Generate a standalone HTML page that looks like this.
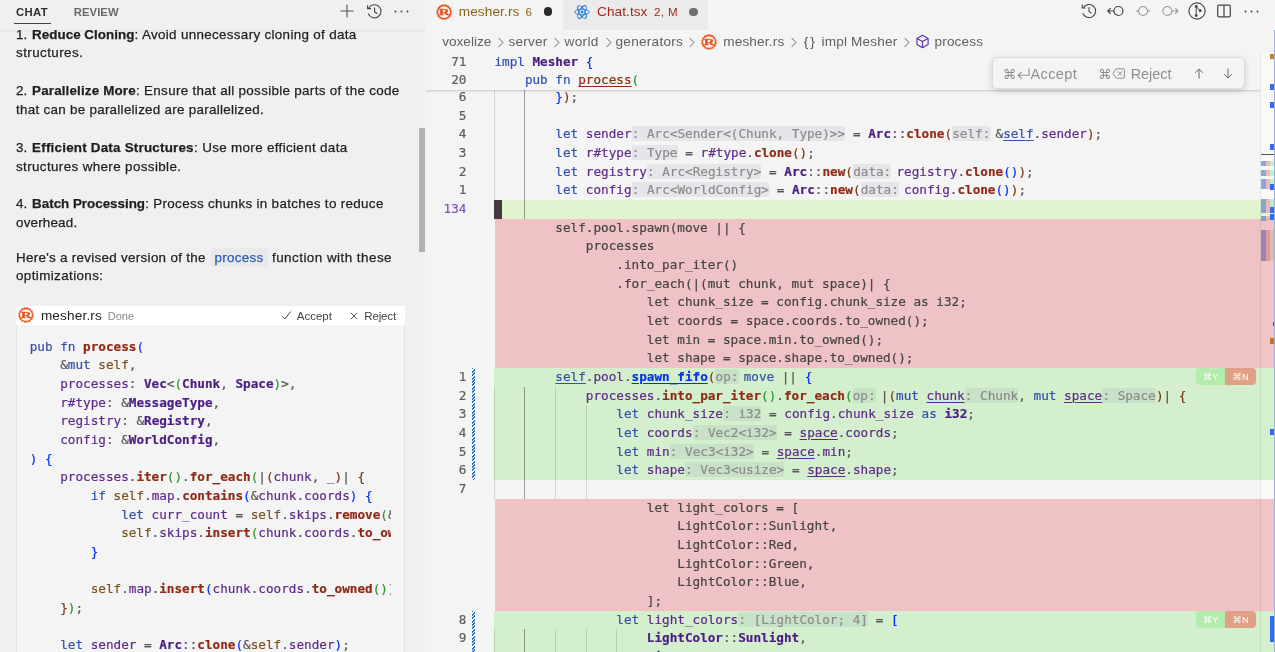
<!DOCTYPE html><html lang="en"><head><meta charset="utf-8"><title>mesher.rs</title><style>
*{box-sizing:border-box}
html,body{margin:0;padding:0}
body{width:1275px;height:652px;overflow:hidden;position:relative;background:#f4f4f4;font-family:"Liberation Sans", "DejaVu Sans", sans-serif;font-size:13px;color:#222}
.abs{position:absolute}
#left{will-change:transform;position:absolute;left:0;top:0;width:425.2px;height:652px;background:#f0f0f0;overflow:hidden}
#right{will-change:transform;position:absolute;left:426px;top:0;width:849px;height:652px;background:#f4f4f4;overflow:hidden}
.mono{-webkit-text-stroke:0.2px;font-family:"DejaVu Sans Mono", "Liberation Mono", monospace;font-size:12.665px;white-space:pre;line-height:18.667px;letter-spacing:0}
.row{position:absolute;left:0;width:849px;height:18.667px}
.ln{position:absolute;left:0;width:40.4px;text-align:right;color:#5c6055;height:18.667px}
.code{position:absolute;left:68.39999999999998px;height:18.667px;color:#444}
.k{color:#3450b0}
.v{color:#5e2b8c}
.t{color:#4b1d82;font-weight:bold}
.f{color:#8e2a16;font-weight:bold}
.fn{color:#8e2a16}
.s{color:#7a5222}
.p{color:#555}
.b1{color:#0431fa}
.b2{color:#319331}
.b3{color:#7b3814}
.h{color:#8c8c8c;background:rgba(40,40,110,0.065);border-radius:2px;padding:0 0.2px}
.hp{margin-right:5px}
.bd{font-weight:bold}
.u{text-decoration:underline;text-underline-offset:2px}
.fit{white-space:pre}
.bc{font-size:13.5px;line-height:18px;color:#616161;white-space:pre}
.cl{position:absolute;left:16px;white-space:pre;font-size:13px;line-height:19px;height:19px;color:#1f1f1f}
.cl b{font-weight:bold}
</style></head><body>
<div id="left">
<div class="abs fit " id="c0" style="left:16.0px;top:24.7px;letter-spacing:0.114px;font-size:13.4px;line-height:19px;color:#1f1f1f;-webkit-text-stroke:0.25px;">1.</div>
<div class="abs fit " id="c1" style="left:32.1px;top:24.7px;letter-spacing:0.027px;font-size:13.4px;line-height:19px;color:#1f1f1f;-webkit-text-stroke:0.25px;"><b>Reduce Cloning</b></div>
<div class="abs fit " id="c2" style="left:134.6px;top:24.7px;letter-spacing:0.330px;font-size:13.4px;line-height:19px;color:#1f1f1f;-webkit-text-stroke:0.25px;">: Avoid unnecessary cloning of data</div>
<div class="abs fit " id="c3" style="left:16.0px;top:43.4px;letter-spacing:0.435px;font-size:13.4px;line-height:19px;color:#1f1f1f;-webkit-text-stroke:0.25px;">structures.</div>
<div class="abs fit " id="c4" style="left:16.0px;top:80.8px;letter-spacing:0.114px;font-size:13.4px;line-height:19px;color:#1f1f1f;-webkit-text-stroke:0.25px;">2.</div>
<div class="abs fit " id="c5" style="left:32.1px;top:80.8px;letter-spacing:0.154px;font-size:13.4px;line-height:19px;color:#1f1f1f;-webkit-text-stroke:0.25px;"><b>Parallelize More</b></div>
<div class="abs fit " id="c6" style="left:136.0px;top:80.8px;letter-spacing:0.323px;font-size:13.4px;line-height:19px;color:#1f1f1f;-webkit-text-stroke:0.25px;">: Ensure that all possible parts of the code</div>
<div class="abs fit " id="c7" style="left:16.0px;top:99.6px;letter-spacing:0.286px;font-size:13.4px;line-height:19px;color:#1f1f1f;-webkit-text-stroke:0.25px;">that can be parallelized are parallelized.</div>
<div class="abs fit " id="c8" style="left:16.0px;top:137.5px;letter-spacing:0.114px;font-size:13.4px;line-height:19px;color:#1f1f1f;-webkit-text-stroke:0.25px;">3.</div>
<div class="abs fit " id="c9" style="left:32.1px;top:137.5px;letter-spacing:0.217px;font-size:13.4px;line-height:19px;color:#1f1f1f;-webkit-text-stroke:0.25px;"><b>Efficient Data Structures</b></div>
<div class="abs fit " id="c10" style="left:194.0px;top:137.5px;letter-spacing:0.344px;font-size:13.4px;line-height:19px;color:#1f1f1f;-webkit-text-stroke:0.25px;">: Use more efficient data</div>
<div class="abs fit " id="c11" style="left:16.0px;top:156.5px;letter-spacing:0.378px;font-size:13.4px;line-height:19px;color:#1f1f1f;-webkit-text-stroke:0.25px;">structures where possible.</div>
<div class="abs fit " id="c12" style="left:16.0px;top:193.8px;letter-spacing:0.114px;font-size:13.4px;line-height:19px;color:#1f1f1f;-webkit-text-stroke:0.25px;">4.</div>
<div class="abs fit " id="c13" style="left:32.1px;top:193.8px;letter-spacing:-0.014px;font-size:13.4px;line-height:19px;color:#1f1f1f;-webkit-text-stroke:0.25px;"><b>Batch Processing</b></div>
<div class="abs fit " id="c14" style="left:145.2px;top:193.8px;letter-spacing:0.330px;font-size:13.4px;line-height:19px;color:#1f1f1f;-webkit-text-stroke:0.25px;">: Process chunks in batches to reduce</div>
<div class="abs fit " id="c15" style="left:16.0px;top:212.6px;letter-spacing:0.193px;font-size:13.4px;line-height:19px;color:#1f1f1f;-webkit-text-stroke:0.25px;">overhead.</div>
<div class="abs fit " id="c16" style="left:16.0px;top:247.8px;letter-spacing:0.298px;font-size:13.4px;line-height:19px;color:#1f1f1f;-webkit-text-stroke:0.25px;">Here's a revised version of the</div>
<div class="abs fit " id="c17" style="left:272.0px;top:247.8px;letter-spacing:0.478px;font-size:13.4px;line-height:19px;color:#1f1f1f;-webkit-text-stroke:0.25px;">function with these</div>
<div class="abs fit " id="c18" style="left:16.0px;top:266.3px;letter-spacing:0.395px;font-size:13.4px;line-height:19px;color:#1f1f1f;-webkit-text-stroke:0.25px;">optimizations:</div>
<div class="abs" style="left:210.8px;top:247.6px;width:57px;height:19px;background:#e9e9e9;border-radius:3px"></div>
<div class="abs fit " id="cproc" style="left:214.6px;top:247.8px;letter-spacing:0.301px;font-size:13.4px;line-height:19px;color:#1f1f1f;-webkit-text-stroke:0.25px;color:#2a5db0">process</div>
<div class="abs" style="left:0;top:0;width:426px;height:30px;background:#f0f0f0;box-shadow:0 1px 2px rgba(0,0,0,0.07)"></div>
<div class="abs fit " id="tabchat" style="left:16.0px;top:4.9px;letter-spacing:0.363px;font-size:11.3px;line-height:14px;font-weight:bold;color:#2f2f2f">CHAT</div>
<div class="abs" style="left:14px;top:22.5px;width:36.5px;height:1px;background:#444"></div>
<div class="abs fit " id="tabrev" style="left:73.7px;top:4.9px;letter-spacing:0.070px;font-size:11.3px;line-height:14px;font-weight:bold;color:#6a6a6a">REVIEW</div>
<svg class="abs" style="left:339px;top:3px" width="16" height="16" viewBox="0 0 16 16"><path d="M8 1.5v13M1.5 8h13" stroke="#555" stroke-width="1.1" fill="none"/></svg>
<svg class="abs" style="left:366px;top:3px" width="17" height="17" viewBox="0 0 17 17" fill="none" stroke="#444" stroke-width="1.1"><path d="M2.6 5.2A6.6 6.6 0 1 1 2.2 10.5"/><path d="M1.6 2.2v3.4h3.4"/><path d="M8.6 4.6v4.2l2.6 2"/></svg>
<svg class="abs" style="left:393px;top:9px" width="17" height="5" viewBox="0 0 17 5"><circle cx="2.5" cy="2.5" r="1" fill="#444"/><circle cx="8.5" cy="2.5" r="1" fill="#444"/><circle cx="14.5" cy="2.5" r="1" fill="#444"/></svg>
<div class="abs" style="left:418.6px;top:128.4px;width:6.6px;height:124px;background:#b3b3b3"></div>
<div class="abs" style="left:16px;top:306px;width:388.7px;height:360px;background:#f4f4f4;border:1px solid #e2e2e2"></div>
<div class="abs" style="left:16px;top:306px;width:388.7px;height:19.1px;background:#fff"></div>
<div class="abs fit " id="cardname" style="left:40.9px;top:306.5px;letter-spacing:0.157px;font-size:13.6px;line-height:18px;color:#222">mesher.rs</div>
<div class="abs fit " id="carddone" style="left:107.8px;top:307.4px;letter-spacing:-0.024px;font-size:11px;line-height:18px;color:#8a8a8a">Done</div>
<div class="abs fit " id="cardacc" style="left:296.7px;top:306.9px;letter-spacing:0.021px;font-size:11.5px;line-height:18px;color:#444">Accept</div>
<div class="abs fit " id="cardrej" style="left:364.3px;top:306.9px;letter-spacing:-0.152px;font-size:11.5px;line-height:18px;color:#444">Reject</div>
<svg class="abs" style="left:281px;top:310px" width="11" height="11" viewBox="0 0 11 11"><path d="M1 6.2l2.8 2.8L9.6 1.6" stroke="#444" stroke-width="1" fill="none"/></svg>
<svg class="abs" style="left:350px;top:311.5px" width="8" height="8" viewBox="0 0 8 8"><path d="M0.8 0.8l6.4 6.4M7.2 0.8L0.8 7.2" stroke="#444" stroke-width="0.9" fill="none"/></svg>
<svg class="abs" style="left:16.9px;top:306.1px" width="18.0" height="18.0" viewBox="-9.0 -9.0 18.0 18.0"><circle r="6.51" fill="none" stroke="#e8561f" stroke-width="1.3"/><path d="M6.63 1.32L7.60 1.51M5.62 3.76L6.44 4.31M3.76 5.62L4.31 6.44M1.32 6.63L1.51 7.60M-1.32 6.63L-1.51 7.60M-3.76 5.62L-4.31 6.44M-5.62 3.76L-6.44 4.31M-6.63 1.32L-7.60 1.51M-6.63 -1.32L-7.60 -1.51M-5.62 -3.76L-6.44 -4.31M-3.76 -5.62L-4.31 -6.44M-1.32 -6.63L-1.51 -7.60M1.32 -6.63L1.51 -7.60M3.76 -5.62L4.31 -6.44M5.62 -3.76L6.44 -4.31M6.63 -1.32L7.60 -1.51" stroke="#e8561f" stroke-width="1.7" fill="none"/><text x="0" y="2.88" text-anchor="middle" transform="scale(1.85 1)" font-family='"Liberation Serif","DejaVu Serif",serif' font-weight="bold" font-size="8.0" fill="#e8561f" stroke="#e8561f" stroke-width="0.3">R</text></svg>
<div class="abs mono" style="left:29.7px;top:337.7px;width:361px;height:320px;overflow:hidden;color:#444">
<div class="abs" style="left:0;top:0.00px;height:18.667px"><span class="k">pub</span> <span class="k">fn</span> <span class="f">process</span><span class="b1">(</span></div>
<div class="abs" style="left:0;top:18.67px;height:18.667px">    <span class="p">&amp;</span><span class="k">mut</span> <span class="s">self</span><span class="p">,</span></div>
<div class="abs" style="left:0;top:37.33px;height:18.667px">    <span class="v">processes</span><span class="p">:</span> <span class="t">Vec</span><span class="p">&lt;</span><span class="b2">(</span><span class="t">Chunk</span><span class="p">,</span> <span class="t">Space</span><span class="b2">)</span><span class="p">&gt;,</span></div>
<div class="abs" style="left:0;top:56.00px;height:18.667px">    <span class="v">r#type</span><span class="p">:</span> <span class="p">&amp;</span><span class="t">MessageType</span><span class="p">,</span></div>
<div class="abs" style="left:0;top:74.67px;height:18.667px">    <span class="v">registry</span><span class="p">:</span> <span class="p">&amp;</span><span class="t">Registry</span><span class="p">,</span></div>
<div class="abs" style="left:0;top:93.34px;height:18.667px">    <span class="v">config</span><span class="p">:</span> <span class="p">&amp;</span><span class="t">WorldConfig</span><span class="p">,</span></div>
<div class="abs" style="left:0;top:112.00px;height:18.667px"><span class="b1">)</span> <span class="b1">{</span></div>
<div class="abs" style="left:0;top:130.67px;height:18.667px">    <span class="v">processes</span><span class="p">.</span><span class="f">iter</span><span class="b2">()</span><span class="p">.</span><span class="f">for_each</span><span class="b2">(</span><span class="p">|</span><span class="b3">(</span><span class="v">chunk</span><span class="p">,</span> <span class="v">_</span><span class="b3">)</span><span class="p">|</span> <span class="b3">{</span></div>
<div class="abs" style="left:0;top:149.34px;height:18.667px">        <span class="k">if</span> <span class="s">self</span><span class="p">.</span><span class="v">map</span><span class="p">.</span><span class="f">contains</span><span class="b1">(</span><span class="p">&amp;</span><span class="v">chunk</span><span class="p">.</span><span class="v">coords</span><span class="b1">)</span> <span class="b1">{</span></div>
<div class="abs" style="left:0;top:168.00px;height:18.667px">            <span class="k">let</span> <span class="v">curr_count</span> <span class="p">=</span> <span class="s">self</span><span class="p">.</span><span class="v">skips</span><span class="p">.</span><span class="f">remove</span><span class="b2">(</span><span class="p">&amp;</span><span class="v">chunk.coords).unwrap_or(0);</span></div>
<div class="abs" style="left:0;top:186.67px;height:18.667px">            <span class="s">self</span><span class="p">.</span><span class="v">skips</span><span class="p">.</span><span class="f">insert</span><span class="b2">(</span><span class="v">chunk</span><span class="p">.</span><span class="v">coords</span><span class="p">.</span><span class="f">to_owned</span><span class="b3">()</span><span class="p">, curr_count + 1);</span></div>
<div class="abs" style="left:0;top:205.34px;height:18.667px">        <span class="b1">}</span></div>
<div class="abs" style="left:0;top:224.00px;height:18.667px"></div>
<div class="abs" style="left:0;top:242.67px;height:18.667px">        <span class="s">self</span><span class="p">.</span><span class="v">map</span><span class="p">.</span><span class="f">insert</span><span class="b1">(</span><span class="v">chunk</span><span class="p">.</span><span class="v">coords</span><span class="p">.</span><span class="f">to_owned</span><span class="b2">()</span><span class="p">));</span></div>
<div class="abs" style="left:0;top:261.34px;height:18.667px">    <span class="b3">}</span><span class="b2">)</span><span class="p">;</span></div>
<div class="abs" style="left:0;top:280.00px;height:18.667px"></div>
<div class="abs" style="left:0;top:298.67px;height:18.667px">    <span class="k">let</span> <span class="v">sender</span> <span class="p">=</span> <span class="t">Arc</span><span class="p">::</span><span class="f">clone</span><span class="b1">(</span><span class="p">&amp;</span><span class="s">self</span><span class="p">.</span><span class="v">sender</span><span class="b1">)</span><span class="p">;</span></div>
</div>
</div>
<div id="right">
<div class="abs" style="left:834px;top:52.5px;width:15px;height:600px;background:#f9f9f9"></div>
<div class="mono">
<div class="abs" style="left:67.7px;top:200.10px;width:781.3px;height:18.72px;background:#e1f3d0"></div>
<div class="abs" style="left:68.8px;top:218.77px;width:780.2px;height:18.72px;background:#efc2c5"></div>
<div class="abs" style="left:68.8px;top:237.43px;width:780.2px;height:18.72px;background:#efc2c5"></div>
<div class="abs" style="left:68.8px;top:256.10px;width:780.2px;height:18.72px;background:#efc2c5"></div>
<div class="abs" style="left:68.8px;top:274.77px;width:780.2px;height:18.72px;background:#efc2c5"></div>
<div class="abs" style="left:68.8px;top:293.44px;width:780.2px;height:18.72px;background:#efc2c5"></div>
<div class="abs" style="left:68.8px;top:312.10px;width:780.2px;height:18.72px;background:#efc2c5"></div>
<div class="abs" style="left:68.8px;top:330.77px;width:780.2px;height:18.72px;background:#efc2c5"></div>
<div class="abs" style="left:68.8px;top:349.44px;width:780.2px;height:18.72px;background:#efc2c5"></div>
<div class="abs" style="left:67.7px;top:368.10px;width:781.3px;height:18.72px;background:#d3efcd"></div>
<div class="abs" style="left:67.7px;top:386.77px;width:781.3px;height:18.72px;background:#d3efcd"></div>
<div class="abs" style="left:67.7px;top:405.44px;width:781.3px;height:18.72px;background:#d3efcd"></div>
<div class="abs" style="left:67.7px;top:424.10px;width:781.3px;height:18.72px;background:#d3efcd"></div>
<div class="abs" style="left:67.7px;top:442.77px;width:781.3px;height:18.72px;background:#d3efcd"></div>
<div class="abs" style="left:67.7px;top:461.44px;width:781.3px;height:18.72px;background:#d3efcd"></div>
<div class="abs" style="left:68.8px;top:498.77px;width:780.2px;height:18.72px;background:#efc2c5"></div>
<div class="abs" style="left:68.8px;top:517.44px;width:780.2px;height:18.72px;background:#efc2c5"></div>
<div class="abs" style="left:68.8px;top:536.11px;width:780.2px;height:18.72px;background:#efc2c5"></div>
<div class="abs" style="left:68.8px;top:554.77px;width:780.2px;height:18.72px;background:#efc2c5"></div>
<div class="abs" style="left:68.8px;top:573.44px;width:780.2px;height:18.72px;background:#efc2c5"></div>
<div class="abs" style="left:68.8px;top:592.11px;width:780.2px;height:18.72px;background:#efc2c5"></div>
<div class="abs" style="left:67.7px;top:610.77px;width:781.3px;height:18.72px;background:#d3efcd"></div>
<div class="abs" style="left:67.7px;top:629.44px;width:781.3px;height:18.72px;background:#d3efcd"></div>
<div class="abs" style="left:67.7px;top:648.11px;width:781.3px;height:18.72px;background:#d3efcd"></div>
<div class="abs" style="left:68.0px;top:88.00px;width:1px;height:112.10px;background:rgba(0,0,0,0.13)"></div>
<div class="abs" style="left:98.3px;top:88.00px;width:1px;height:130.77px;background:rgba(0,0,0,0.36)"></div>
<div class="abs" style="left:68.0px;top:386.77px;width:1px;height:112.00px;background:rgba(0,0,0,0.13)"></div>
<div class="abs" style="left:98.3px;top:386.77px;width:1px;height:112.00px;background:rgba(0,0,0,0.36)"></div>
<div class="abs" style="left:129.0px;top:386.77px;width:1px;height:112.00px;background:rgba(0,0,0,0.13)"></div>
<div class="abs" style="left:159.6px;top:405.44px;width:1px;height:93.34px;background:rgba(0,0,0,0.13)"></div>
<div class="abs" style="left:68.0px;top:629.44px;width:1px;height:22.56px;background:rgba(0,0,0,0.13)"></div>
<div class="abs" style="left:98.3px;top:629.44px;width:1px;height:22.56px;background:rgba(0,0,0,0.36)"></div>
<div class="abs" style="left:129.0px;top:629.44px;width:1px;height:22.56px;background:rgba(0,0,0,0.13)"></div>
<div class="abs" style="left:159.6px;top:629.44px;width:1px;height:22.56px;background:rgba(0,0,0,0.13)"></div>
<div class="abs" style="left:190.0px;top:629.44px;width:1px;height:22.56px;background:rgba(0,0,0,0.13)"></div>
<div class="row" style="top:88.10px"><div class="ln" style="">6</div><div class="code">        <span class="b1">}</span><span class="b3">)</span><span class="p">;</span></div></div>
<div class="row" style="top:106.76px"><div class="ln" style="">5</div><div class="code"></div></div>
<div class="row" style="top:125.43px"><div class="ln" style="">4</div><div class="code">        <span class="k">let</span> <span class="v">sender</span><span class="h">: Arc&lt;Sender&lt;(Chunk, Type)&gt;&gt;</span> <span class="p">=</span> <span class="t">Arc</span><span class="p">::</span><span class="f">clone</span><span class="b3">(</span><span class="h hp">self:</span><span class="p">&amp;</span><span class="k u">self</span><span class="p">.</span><span class="v">sender</span><span class="b3">)</span><span class="p">;</span></div></div>
<div class="row" style="top:144.10px"><div class="ln" style="">3</div><div class="code">        <span class="k">let</span> <span class="v">r#type</span><span class="h">: Type</span> <span class="p">=</span> <span class="v">r#type</span><span class="p">.</span><span class="f">clone</span><span class="b3">()</span><span class="p">;</span></div></div>
<div class="row" style="top:162.77px"><div class="ln" style="">2</div><div class="code">        <span class="k">let</span> <span class="v">registry</span><span class="h">: Arc&lt;Registry&gt;</span> <span class="p">=</span> <span class="t">Arc</span><span class="p">::</span><span class="f">new</span><span class="b3">(</span><span class="h hp">data:</span><span class="v">registry</span><span class="p">.</span><span class="f">clone</span><span class="b1">()</span><span class="b3">)</span><span class="p">;</span></div></div>
<div class="row" style="top:181.43px"><div class="ln" style="">1</div><div class="code">        <span class="k">let</span> <span class="v">config</span><span class="h">: Arc&lt;WorldConfig&gt;</span> <span class="p">=</span> <span class="t">Arc</span><span class="p">::</span><span class="f">new</span><span class="b3">(</span><span class="h hp">data:</span><span class="v">config</span><span class="p">.</span><span class="f">clone</span><span class="b1">()</span><span class="b3">)</span><span class="p">;</span></div></div>
<div class="row" style="top:200.10px"><div class="ln" style=";color:#7b52c4">134</div><div class="code"></div></div>
<div class="row" style="top:218.77px"><div class="ln" style=""></div><div class="code"><span class="r">        self.pool.spawn(move || {</span></div></div>
<div class="row" style="top:237.43px"><div class="ln" style=""></div><div class="code"><span class="r">            processes</span></div></div>
<div class="row" style="top:256.10px"><div class="ln" style=""></div><div class="code"><span class="r">                .into_par_iter()</span></div></div>
<div class="row" style="top:274.77px"><div class="ln" style=""></div><div class="code"><span class="r">                .for_each(|(mut chunk, mut space)| {</span></div></div>
<div class="row" style="top:293.44px"><div class="ln" style=""></div><div class="code"><span class="r">                    let chunk_size = config.chunk_size as i32;</span></div></div>
<div class="row" style="top:312.10px"><div class="ln" style=""></div><div class="code"><span class="r">                    let coords = space.coords.to_owned();</span></div></div>
<div class="row" style="top:330.77px"><div class="ln" style=""></div><div class="code"><span class="r">                    let min = space.min.to_owned();</span></div></div>
<div class="row" style="top:349.44px"><div class="ln" style=""></div><div class="code"><span class="r">                    let shape = space.shape.to_owned();</span></div></div>
<div class="row" style="top:368.10px"><div class="ln" style="">1</div><div class="code">        <span class="k u">self</span><span class="p">.</span><span class="v">pool</span><span class="p">.</span><span class="b1 u bd">spawn_fifo</span><span class="b3">(</span><span class="h hp">op:</span><span class="k">move</span> <span class="p">||</span> <span class="b1">{</span></div></div>
<div class="row" style="top:386.77px"><div class="ln" style="">2</div><div class="code">            <span class="v">processes</span><span class="p">.</span><span class="f">into_par_iter</span><span class="b2">()</span><span class="p">.</span><span class="f">for_each</span><span class="b2">(</span><span class="h hp">op:</span><span class="p">|</span><span class="b3">(</span><span class="k">mut</span> <span class="v u">chunk</span><span class="h">: Chunk</span><span class="p">,</span> <span class="k">mut</span> <span class="v u">space</span><span class="h">: Space</span><span class="b3">)</span><span class="p">|</span> <span class="b3">{</span></div></div>
<div class="row" style="top:405.44px"><div class="ln" style="">3</div><div class="code">                <span class="k">let</span> <span class="v">chunk_size</span><span class="h">: i32</span> <span class="p">=</span> <span class="v">config</span><span class="p">.</span><span class="v">chunk_size</span> <span class="k">as</span> <span class="t">i32</span><span class="p">;</span></div></div>
<div class="row" style="top:424.10px"><div class="ln" style="">4</div><div class="code">                <span class="k">let</span> <span class="v">coords</span><span class="h">: Vec2&lt;i32&gt;</span> <span class="p">=</span> <span class="v u">space</span><span class="p">.</span><span class="v">coords</span><span class="p">;</span></div></div>
<div class="row" style="top:442.77px"><div class="ln" style="">5</div><div class="code">                <span class="k">let</span> <span class="v">min</span><span class="h">: Vec3&lt;i32&gt;</span> <span class="p">=</span> <span class="v u">space</span><span class="p">.</span><span class="v">min</span><span class="p">;</span></div></div>
<div class="row" style="top:461.44px"><div class="ln" style="">6</div><div class="code">                <span class="k">let</span> <span class="v">shape</span><span class="h">: Vec3&lt;usize&gt;</span> <span class="p">=</span> <span class="v u">space</span><span class="p">.</span><span class="v">shape</span><span class="p">;</span></div></div>
<div class="row" style="top:480.11px"><div class="ln" style="">7</div><div class="code"></div></div>
<div class="row" style="top:498.77px"><div class="ln" style=""></div><div class="code"><span class="r">                    let light_colors = [</span></div></div>
<div class="row" style="top:517.44px"><div class="ln" style=""></div><div class="code"><span class="r">                        LightColor::Sunlight,</span></div></div>
<div class="row" style="top:536.11px"><div class="ln" style=""></div><div class="code"><span class="r">                        LightColor::Red,</span></div></div>
<div class="row" style="top:554.77px"><div class="ln" style=""></div><div class="code"><span class="r">                        LightColor::Green,</span></div></div>
<div class="row" style="top:573.44px"><div class="ln" style=""></div><div class="code"><span class="r">                        LightColor::Blue,</span></div></div>
<div class="row" style="top:592.11px"><div class="ln" style=""></div><div class="code"><span class="r">                    ];</span></div></div>
<div class="row" style="top:610.77px"><div class="ln" style="">8</div><div class="code">                <span class="k">let</span> <span class="v">light_colors</span><span class="h">: [LightColor; 4]</span> <span class="p">=</span> <span class="b1">[</span></div></div>
<div class="row" style="top:629.44px"><div class="ln" style="">9</div><div class="code">                    <span class="t">LightColor</span><span class="p">::</span><span class="t">Sunlight</span><span class="p">,</span></div></div>
<div class="row" style="top:648.11px"><div class="ln" style="">10</div><div class="code">                    <span class="t">LightColor</span><span class="p">::</span><span class="t">Red</span><span class="p">,</span></div></div>
<div class="abs" style="left:68.39999999999998px;top:200.10px;width:7.4px;height:18.667px;background:#443a40"></div>
<div class="abs" style="left:46.1px;top:368.10px;width:3.1px;height:112.00px;background:repeating-linear-gradient(135deg,#2a72c8 0,#2a72c8 1.4px,#f4f4f4 1.4px,#f4f4f4 2.4px)"></div>
<div class="abs" style="left:46.1px;top:610.77px;width:3.1px;height:60px;background:repeating-linear-gradient(135deg,#2a72c8 0,#2a72c8 1.4px,#f4f4f4 1.4px,#f4f4f4 2.4px)"></div>
<div class="abs" style="left:0;top:52.5px;width:834px;height:37.5px;background:#f4f4f4"></div>
<div class="abs" style="left:0;top:90px;width:834px;height:3px;background:linear-gradient(rgba(0,0,0,0.16),rgba(0,0,0,0.04) 60%,rgba(0,0,0,0))"></div>
<div class="row" style="top:52.6px"><div class="ln">71</div><div class="code"><span class="k">impl</span> <span class="t">Mesher</span> <span class="b1">{</span></div></div>
<div class="row" style="top:71.3px"><div class="ln">20</div><div class="code">    <span class="k">pub</span> <span class="k">fn</span> <span class="fn u">process</span><span class="b2">(</span></div></div>
</div>
<div class="abs" style="left:770px;top:368.2px;width:29.5px;height:16.6px;background:#b4ecad;border-radius:4px 0 0 4px;color:#fff;font-size:9.3px;line-height:16.6px;padding-top:1.1px;text-align:center">⌘Y</div>
<div class="abs" style="left:799.3px;top:368.2px;width:30.6px;height:16.6px;background:#e0a086;border-radius:0 4px 4px 0;color:#fff;font-size:9.3px;line-height:16.6px;padding-top:1.1px;text-align:center">⌘N</div>
<div class="abs" style="left:770px;top:611.2px;width:29.5px;height:16.6px;background:#b4ecad;border-radius:4px 0 0 4px;color:#fff;font-size:9.3px;line-height:16.6px;padding-top:1.1px;text-align:center">⌘Y</div>
<div class="abs" style="left:799.3px;top:611.2px;width:30.6px;height:16.6px;background:#e0a086;border-radius:0 4px 4px 0;color:#fff;font-size:9.3px;line-height:16.6px;padding-top:1.1px;text-align:center">⌘N</div>
<div class="abs" style="left:834px;top:52.5px;width:15px;height:600px;background:rgba(255,255,255,0.05);border-left:1px solid rgba(0,0,0,0.08)"></div>
<div class="abs" style="left:835.0px;top:160.9px;width:4.6px;height:5.6px;background:rgba(100,140,200,0.75)"></div>
<div class="abs" style="left:839.6px;top:160.9px;width:4.4px;height:5.6px;background:rgba(235,170,180,0.8)"></div>
<div class="abs" style="left:844.0px;top:160.9px;width:4px;height:5.6px;background:rgba(190,230,190,0.8)"></div>
<div class="abs" style="left:835.0px;top:170.0px;width:4.6px;height:5.8px;background:rgba(100,140,200,0.75)"></div>
<div class="abs" style="left:839.6px;top:170.0px;width:4.4px;height:5.8px;background:rgba(235,170,180,0.8)"></div>
<div class="abs" style="left:844.0px;top:170.0px;width:4px;height:5.8px;background:rgba(190,230,190,0.8)"></div>
<div class="abs" style="left:835.0px;top:178.8px;width:4.6px;height:9.8px;background:rgba(100,140,200,0.75)"></div>
<div class="abs" style="left:839.6px;top:178.8px;width:4.4px;height:9.8px;background:rgba(235,170,180,0.8)"></div>
<div class="abs" style="left:844.0px;top:178.8px;width:4px;height:9.8px;background:rgba(190,230,190,0.8)"></div>
<div class="abs" style="left:835.0px;top:198.9px;width:4.6px;height:14.1px;background:rgba(100,140,200,0.75)"></div>
<div class="abs" style="left:839.6px;top:198.9px;width:4.4px;height:14.1px;background:rgba(235,170,180,0.8)"></div>
<div class="abs" style="left:844.0px;top:198.9px;width:4px;height:14.1px;background:rgba(190,230,190,0.8)"></div>
<div class="abs" style="left:835.0px;top:215.6px;width:4.6px;height:5.4px;background:rgba(100,140,200,0.75)"></div>
<div class="abs" style="left:839.6px;top:215.6px;width:4.4px;height:5.4px;background:rgba(235,170,180,0.8)"></div>
<div class="abs" style="left:844.0px;top:215.6px;width:4px;height:5.4px;background:rgba(190,230,190,0.8)"></div>
<div class="abs" style="left:835.0px;top:230.0px;width:4.6px;height:30.7px;background:rgba(130,120,170,0.8)"></div>
<div class="abs" style="left:839.6px;top:230.0px;width:4.4px;height:30.7px;background:rgba(225,140,150,0.8)"></div>
<div class="abs" style="left:844.0px;top:230.0px;width:4px;height:30.7px;background:rgba(215,185,160,0.8)"></div>
<div class="abs" style="left:843.5px;top:53.5px;width:4.5px;height:5.5px;background:#c98127"></div>
<div class="abs" style="left:843.5px;top:84.0px;width:4.5px;height:5.6px;background:#2f6fed"></div>
<div class="abs" style="left:843.5px;top:102.0px;width:4.5px;height:6.0px;background:#2f6fed"></div>
<div class="abs" style="left:843.5px;top:144.3px;width:4.5px;height:5.7px;background:#2f6fed"></div>
<div class="abs" style="left:843.5px;top:183.7px;width:4.5px;height:5.9px;background:#2f6fed"></div>
<div class="abs" style="left:843.5px;top:206.7px;width:4.5px;height:6.3px;background:#2f6fed"></div>
<div class="abs" style="left:843.5px;top:214.4px;width:4.5px;height:5.6px;background:#2f6fed"></div>
<div class="abs" style="left:843.5px;top:428.8px;width:4.5px;height:6.0px;background:#2f6fed"></div>
<div class="abs" style="left:843.5px;top:616.2px;width:4.5px;height:25.7px;background:#2f6fed"></div>
<div class="abs" style="left:843.5px;top:338.0px;width:4.5px;height:6.0px;background:#c8702a"></div>
<div class="abs" style="left:846.5px;top:321.6px;width:1.5px;height:4.4px;background:#555"></div>
<div class="abs" style="left:834.5px;top:153.5px;width:14px;height:1.5px;background:#555"></div>
<div class="abs" style="left:848px;top:0;width:1px;height:652px;background:#9fb0d6"></div>
<div class="abs" style="left:0;top:0;width:849px;height:30px;background:#f4f4f4"></div>
<div class="abs" style="left:137.3px;top:0;width:144.7px;height:29.7px;background:#ebebeb"></div>
<svg class="abs" style="left:8.9px;top:2.8px" width="18.2" height="18.2" viewBox="-9.1 -9.1 18.2 18.2"><circle r="6.60" fill="none" stroke="#e8561f" stroke-width="1.3"/><path d="M6.72 1.34L7.70 1.53M5.69 3.80L6.53 4.36M3.80 5.69L4.36 6.53M1.34 6.72L1.53 7.70M-1.34 6.72L-1.53 7.70M-3.80 5.69L-4.36 6.53M-5.69 3.80L-6.53 4.36M-6.72 1.34L-7.70 1.53M-6.72 -1.34L-7.70 -1.53M-5.69 -3.80L-6.53 -4.36M-3.80 -5.69L-4.36 -6.53M-1.34 -6.72L-1.53 -7.70M1.34 -6.72L1.53 -7.70M3.80 -5.69L4.36 -6.53M5.69 -3.80L6.53 -4.36M6.72 -1.34L7.70 -1.53" stroke="#e8561f" stroke-width="1.7" fill="none"/><text x="0" y="2.92" text-anchor="middle" transform="scale(1.85 1)" font-family='"Liberation Serif","DejaVu Serif",serif' font-weight="bold" font-size="8.1" fill="#e8561f" stroke="#e8561f" stroke-width="0.3">R</text></svg>
<div class="abs fit " id="tab1" style="left:32.7px;top:2.7px;letter-spacing:0.124px;font-size:13.6px;line-height:18px;color:#866516">mesher.rs</div>
<div class="abs fit " id="tab1b" style="left:99.6px;top:3.4px;letter-spacing:0.947px;font-size:11.6px;line-height:18px;color:#866516">6</div>
<div class="abs" style="left:117.8px;top:7.4px;width:8.2px;height:8.2px;border-radius:50%;background:#2a2a2a"></div>
<svg class="abs" style="left:147.8px;top:3.8px" width="16" height="16" viewBox="-8 -8 16 16" fill="none" stroke="#1f7bd8" stroke-width="0.9"><ellipse rx="7.2" ry="2.8"/><ellipse rx="7.2" ry="2.8" transform="rotate(60)"/><ellipse rx="7.2" ry="2.8" transform="rotate(120)"/><circle r="1.3" fill="#1f7bd8" stroke="none"/></svg>
<div class="abs fit " id="tab2" style="left:171.0px;top:2.7px;letter-spacing:0.078px;font-size:13.6px;line-height:18px;color:#a3281f">Chat.tsx</div>
<div class="abs fit " id="tab2b" style="left:227.9px;top:3.4px;letter-spacing:0.434px;font-size:11.6px;line-height:18px;color:#a3281f">2, M</div>
<div class="abs" style="left:263.4px;top:7.6px;width:8.4px;height:8.4px;border-radius:50%;background:#707070"></div>
<svg class="abs" style="left:654.0px;top:2.4px" width="18" height="18" viewBox="-9.0 -9.0 18 18" fill="none" stroke="#444" stroke-width="1.1"><path d="M-5.6 -3.4A6.6 6.6 0 1 1 -6.2 2.2"/><path d="M-6.8 -6.4v3.4h3.4"/><path d="M0 -3.8v4.2l2.6 2"/></svg>
<svg class="abs" style="left:676.0px;top:4.3px" width="24" height="14" viewBox="-12.0 -7.0 24 14" fill="none" stroke="#444" stroke-width="1.2"><circle cx="4.4" cy="0" r="4.5"/><path d="M-0.1 0h-6M-3.4 -2.8L-6.2 0L-3.4 2.8"/></svg>
<svg class="abs" style="left:705.1px;top:4.3px" width="24" height="14" viewBox="-12.0 -7.0 24 14" fill="none" stroke="#9a9a9a" stroke-width="1.1"><circle cx="0" cy="0" r="4.5"/><path d="M-4.5 0h-2.6M4.5 0h2.6"/></svg>
<svg class="abs" style="left:734.0px;top:4.3px" width="24" height="14" viewBox="-12.0 -7.0 24 14" fill="none" stroke="#9a9a9a" stroke-width="1.1"><circle cx="-4.6" cy="0" r="4.5"/><path d="M-0.1 0h6M3.2 -2.8L6 0L3.2 2.8"/></svg>
<svg class="abs" style="left:760.9px;top:1.4px" width="20" height="20" viewBox="-10.0 -10.0 20 20" fill="none" stroke="#444" stroke-width="1.1"><circle r="8.1"/><path d="M-0.8 -4.4v8.8M-0.8 -4.4l3.8 4" stroke-width="1"/><circle cx="-0.8" cy="-4.6" r="0.9" fill="#444"/><circle cx="-0.8" cy="4.6" r="0.9" fill="#444"/><circle cx="3.2" cy="-0.2" r="0.9" fill="#444"/></svg>
<svg class="abs" style="left:790.0px;top:3.0px" width="16" height="16" viewBox="-8.0 -8.0 16 16" fill="none" stroke="#444" stroke-width="1.2"><rect x="-6.3" y="-5.8" width="12.6" height="11.6" rx="1.4"/><path d="M0 -5.8v11.6"/></svg>
<svg class="abs" style="left:816.5999999999999px;top:9px" width="17" height="5" viewBox="0 0 17 5"><circle cx="2.5" cy="2.5" r="1" fill="#444"/><circle cx="8.5" cy="2.5" r="1" fill="#444"/><circle cx="14.5" cy="2.5" r="1" fill="#444"/></svg>
<div class="abs" style="left:565.8px;top:57.4px;width:253.2px;height:31.8px;background:#f4f4f4;border:1px solid #dcdcdc;border-radius:5px;box-shadow:0 2px 6px rgba(0,0,0,0.16)"></div>
<div class="abs fit " id="w1" style="left:576.8px;top:64.3px;letter-spacing:-1.700px;font-size:13.5px;line-height:20px;color:#8e8e8e;font-family:'DejaVu Sans','Liberation Sans',sans-serif;">⌘</div>
<svg class="abs" style="left:590.8px;top:67px" width="13" height="13" viewBox="0 0 13 13" fill="none" stroke="#8e8e8e" stroke-width="1.1"><path d="M12 1.5v6.7H1.2M4.6 4.8L1.2 8.2l3.4 3.4"/></svg>
<div class="abs fit " id="w3" style="left:604.5px;top:63.6px;letter-spacing:0.376px;font-size:14.5px;line-height:20px;color:#8e8e8e">Accept</div>
<div class="abs fit " id="w4" style="left:672.1px;top:64.3px;letter-spacing:-1.600px;font-size:13.5px;line-height:20px;color:#8e8e8e;font-family:'DejaVu Sans','Liberation Sans',sans-serif;">⌘</div>
<svg class="abs" style="left:686.0px;top:68.2px" width="13" height="11" viewBox="0 0 13 11" fill="none" stroke="#8e8e8e" stroke-width="1"><path d="M4.4 0.8H11.4Q12.4 0.8 12.4 1.8V9.2Q12.4 10.2 11.4 10.2H4.4L0.7 5.5Z"/><path d="M6 3.4l4 4.2M10 3.4l-4 4.2"/></svg>
<div class="abs fit " id="w6" style="left:704.7px;top:63.6px;letter-spacing:-0.068px;font-size:14.5px;line-height:20px;color:#8e8e8e">Reject</div>
<svg class="abs" style="left:767.9px;top:68px" width="10" height="11" viewBox="0 0 10 11" fill="none" stroke="#666" stroke-width="1"><path d="M5 10.5V1M1.2 4.8L5 1l3.8 3.8"/></svg>
<svg class="abs" style="left:796.9px;top:68px" width="10" height="11" viewBox="0 0 10 11" fill="none" stroke="#666" stroke-width="1"><path d="M5 0.5V10M1.2 6.2L5 10l3.8-3.8"/></svg>
<div class="abs fit " id="bc0" style="left:16.2px;top:33.1px;letter-spacing:0.009px;font-size:13.6px;line-height:18px;color:#616161">voxelize</div>
<div class="abs fit " id="bc1" style="left:82.6px;top:33.1px;letter-spacing:0.170px;font-size:13.6px;line-height:18px;color:#616161">server</div>
<div class="abs fit " id="bc2" style="left:138.6px;top:33.1px;letter-spacing:0.303px;font-size:13.6px;line-height:18px;color:#616161">world</div>
<div class="abs fit " id="bc3" style="left:189.5px;top:33.1px;letter-spacing:0.260px;font-size:13.6px;line-height:18px;color:#616161">generators</div>
<div class="abs fit " id="bc4" style="left:297.2px;top:33.1px;letter-spacing:0.168px;font-size:13.6px;line-height:18px;color:#616161">mesher.rs</div>
<div class="abs fit " id="bc5" style="left:395.6px;top:33.1px;letter-spacing:0.161px;font-size:13.6px;line-height:18px;color:#616161">impl Mesher</div>
<div class="abs fit " id="bc6" style="left:508.5px;top:33.1px;letter-spacing:0.156px;font-size:13.6px;line-height:18px;color:#616161">process</div>
<svg class="abs" style="left:70.5px;top:36.5px" width="8" height="11" viewBox="0 0 8 11"><path d="M1.6 1l4.4 4.5L1.6 10" fill="none" stroke="#6a6a6a" stroke-width="1"/></svg>
<svg class="abs" style="left:126.9px;top:36.5px" width="8" height="11" viewBox="0 0 8 11"><path d="M1.6 1l4.4 4.5L1.6 10" fill="none" stroke="#6a6a6a" stroke-width="1"/></svg>
<svg class="abs" style="left:178.5px;top:36.5px" width="8" height="11" viewBox="0 0 8 11"><path d="M1.6 1l4.4 4.5L1.6 10" fill="none" stroke="#6a6a6a" stroke-width="1"/></svg>
<svg class="abs" style="left:262.4px;top:36.5px" width="8" height="11" viewBox="0 0 8 11"><path d="M1.6 1l4.4 4.5L1.6 10" fill="none" stroke="#6a6a6a" stroke-width="1"/></svg>
<svg class="abs" style="left:363.8px;top:36.5px" width="8" height="11" viewBox="0 0 8 11"><path d="M1.6 1l4.4 4.5L1.6 10" fill="none" stroke="#6a6a6a" stroke-width="1"/></svg>
<svg class="abs" style="left:476.8px;top:36.5px" width="8" height="11" viewBox="0 0 8 11"><path d="M1.6 1l4.4 4.5L1.6 10" fill="none" stroke="#6a6a6a" stroke-width="1"/></svg>
<svg class="abs" style="left:273.6px;top:32.5px" width="18.0" height="18.0" viewBox="-9.0 -9.0 18.0 18.0"><circle r="6.51" fill="none" stroke="#e8561f" stroke-width="1.3"/><path d="M6.63 1.32L7.60 1.51M5.62 3.76L6.44 4.31M3.76 5.62L4.31 6.44M1.32 6.63L1.51 7.60M-1.32 6.63L-1.51 7.60M-3.76 5.62L-4.31 6.44M-5.62 3.76L-6.44 4.31M-6.63 1.32L-7.60 1.51M-6.63 -1.32L-7.60 -1.51M-5.62 -3.76L-6.44 -4.31M-3.76 -5.62L-4.31 -6.44M-1.32 -6.63L-1.51 -7.60M1.32 -6.63L1.51 -7.60M3.76 -5.62L4.31 -6.44M5.62 -3.76L6.44 -4.31M6.63 -1.32L7.60 -1.51" stroke="#e8561f" stroke-width="1.7" fill="none"/><text x="0" y="2.88" text-anchor="middle" transform="scale(1.85 1)" font-family='"Liberation Serif","DejaVu Serif",serif' font-weight="bold" font-size="8.0" fill="#e8561f" stroke="#e8561f" stroke-width="0.3">R</text></svg>
<div class="abs fit " id="bcbr" style="left:377.7px;top:32.9px;letter-spacing:1.903px;font-size:13.6px;line-height:18px;color:#555">{}</div>
<svg class="abs" style="left:489.29999999999995px;top:34.2px" width="15" height="15" viewBox="-7.5 -7.5 15 15" fill="none" stroke="#5a2ea6" stroke-width="1.1" stroke-linejoin="round"><path d="M0 -6.2L5.6 -3.1V3.1L0 6.2L-5.6 3.1V-3.1Z"/><path d="M-5.6 -3.1L0 0L5.6 -3.1M0 0V6.2"/></svg>
</div>
</body></html>
